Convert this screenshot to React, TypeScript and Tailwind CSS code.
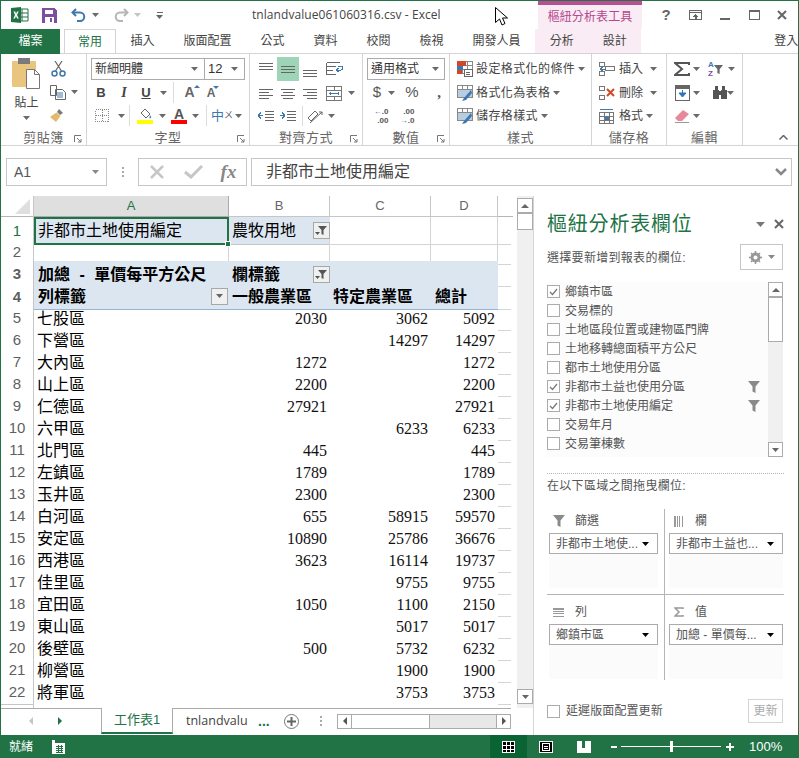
import React from "react";

type P = { className?: string; children?: React.ReactNode };

const Svg = ({ w = 16, h = 16, children, className = "" }: { w?: number; h?: number; children?: React.ReactNode; className?: string }) => (
  <svg width={w} height={h} viewBox={`0 0 ${w} ${h}`} className={`block shrink-0 ${className}`} fill="none" shapeRendering="crispEdges">
    {children}
  </svg>
);

const Caret = ({ className = "", color = "#6a6a6a" }: { className?: string; color?: string }) => (
  <svg width="7" height="4" viewBox="0 0 7 4" className={`block shrink-0 ${className}`}><path d="M0 0h7L3.500 4z" fill={color} /></svg>
);

const Launcher = () => (
  <svg width="8" height="8" viewBox="0 0 8 8" className="block"><path d="M.5 7V.5H7M3 3l4 4M4 7h3V4" stroke="#777" fill="none" /></svg>
);

const VSep = ({ className = "" }: P) => <div className={`w-px self-stretch bg-[#dcdcdc] ${className}`} />;

const Group = ({ label, w, children, launcher }: { label: string; w: number; children?: React.ReactNode; launcher?: boolean }) => (
  <div className="relative flex h-full shrink-0 flex-col border-r border-[#d4d4d4]" style={{ width: w }}>
    <div className="h-[75px] shrink-0">{children}</div>
    <div className="flex h-[17px] items-center justify-center text-[13px] leading-none tracking-[0.5px] text-[#666]">{label}</div>
    {launcher && <div className="absolute bottom-[2px] right-[4px]"><Launcher /></div>}
  </div>
);

const CellBtn = ({ children, w, className = "" }: { children?: React.ReactNode; w: number; className?: string }) => (
  <div className={`flex h-full shrink-0 items-center justify-center ${className}`} style={{ width: w }}>{children}</div>
);

const LinesIcon = ({ ys, xs }: { ys: number[]; xs: [number, number][] }) => (
  <Svg w={16} h={16}>
    {ys.map((y, i) => <rect key={i} x={xs[i][0]} y={y} width={xs[i][1]} height={1} fill="#666" />)}
  </Svg>
);

const FilterGlyph = ({ color = "#8a8a8a", size = 12 }: { color?: string; size?: number }) => (
  <svg width={size} height={size} viewBox="0 0 12 12" className="block shrink-0"><path d="M0 0h12L7.500 5.500V12l-3-1.500v-5z" fill={color} /></svg>
);

const FilterBtn = () => (
  <div className="flex h-[17px] w-[17px] items-center justify-center border border-[#a8a8a8] bg-[#f0f0f0]">
    <svg width="13" height="11" viewBox="0 0 13 11"><path d="M3 1h9L8.500 5v5l-2-1V5z" fill="#555" /><path d="M0 7h5L2.500 10z" fill="#555" /></svg>
  </div>
);

const ArrowBtn = () => (
  <div className="flex h-[17px] w-[17px] items-center justify-center border border-[#a8a8a8] bg-[#f0f0f0]"><Caret color="#666" /></div>
);

const rows: [string, string, string, string][] = [
  ["七股區", "2030", "3062", "5092"], ["下營區", "", "14297", "14297"], ["大內區", "1272", "", "1272"], ["山上區", "2200", "", "2200"],
  ["仁德區", "27921", "", "27921"], ["六甲區", "", "6233", "6233"], ["北門區", "445", "", "445"], ["左鎮區", "1789", "", "1789"],
  ["玉井區", "2300", "", "2300"], ["白河區", "655", "58915", "59570"], ["安定區", "10890", "25786", "36676"], ["西港區", "3623", "16114", "19737"],
  ["佳里區", "", "9755", "9755"], ["宜田區", "1050", "1100", "2150"], ["東山區", "", "5017", "5017"], ["後壁區", "500", "5732", "6232"],
  ["柳營區", "", "1900", "1900"], ["將軍區", "", "3753", "3753"],
];

const grid = "grid grid-cols-[33px_195px_101px_101px_67px_13px]";
const rowHead = "flex items-center justify-center border-r border-b border-[#c6c6c6] bg-white pt-[2px] text-[15px] text-[#5f5f5f]";
const gl = "border-r border-b border-[#d4d4d4]";

const TitleBar = () => (
  <div className="flex h-[28px] shrink-0 items-center">
    <div className="ml-[10px]">
      <svg width="18" height="16" viewBox="0 0 18 16" className="block">
        <path d="M7 2h10v12H7z" fill="#fff" stroke="#217346" />
        <path d="M11 2v12M7 6h10M7 10h10" stroke="#217346" />
        <path d="M0 1l10-1v16L0 15z" fill="#217346" />
        <path d="M2.500 4.500h1.800L5 7l1-2.500h1.700L6 8l1.800 3.500H6L5 9l-1 2.500H2.300L4 8z" fill="#fff" />
      </svg>
    </div>
    <div className="ml-[13px]">
      <svg width="15" height="15" viewBox="0 0 15 15" className="block" shapeRendering="crispEdges">
        <path d="M0 0h12l3 3v12H0z" fill="#7d4f9f" />
        <rect x="3" y="2" width="8" height="4" fill="#fff" />
        <rect x="3" y="9" width="9" height="6" fill="#fff" />
        <rect x="8" y="10" width="2" height="4" fill="#7d4f9f" />
      </svg>
    </div>
    <div className="ml-[14px]">
      <svg width="16" height="14" viewBox="0 0 16 14" className="block"><path d="M5 1L1.500 4.500 5 8" stroke="#3d78b0" strokeWidth="2" fill="none" /><path d="M2 4.500h7a4.200 4.200 0 0 1 0 8.500H6" stroke="#3d78b0" strokeWidth="2" fill="none" /></svg>
    </div>
    <Caret className="ml-[5px]" />
    <div className="ml-[14px]">
      <svg width="16" height="14" viewBox="0 0 16 14" className="block"><path d="M11 1l3.500 3.500L11 8" stroke="#b5b5b5" strokeWidth="2" fill="none" /><path d="M14 4.500H7a4.200 4.200 0 0 0 0 8.500h3" stroke="#b5b5b5" strokeWidth="2" fill="none" /></svg>
    </div>
    <Caret className="ml-[5px]" color="#c4c4c4" />
    <div className="ml-[15px] flex flex-col items-center gap-[2px]">
      <div className="h-px w-[6px] bg-[#666]" />
      <Caret color="#666" />
    </div>
    <div className="ml-[89px] w-[286px] shrink-0 font-['Open_Sans','Noto_Sans_CJK_TC',sans-serif] text-[12px] tracking-[0.06px] text-[#444]">tnlandvalue061060316.csv - Excel</div>
    <div className="flex h-full w-[104px] shrink-0 flex-col bg-[#f9ecf4]">
      <div className="h-[4px] bg-[#b84f92]" />
      <div className="flex flex-1 items-center justify-center text-[12px] tracking-[0.1px] text-[#b5478d]">樞紐分析表工具</div>
    </div>
    <div className="flex flex-1 items-center">
      <CellBtn w={40} className="pl-[8px] text-[15px] font-bold text-[#666]">?</CellBtn>
      <CellBtn w={26}>
        <Svg w={13} h={10}><rect x=".5" y=".5" width="12" height="9" stroke="#666" /><rect x="0" y="2" width="13" height="1" fill="#666" /><path d="M4 6h5M5 5h3M6 4h1M6 6h1v3H6z" stroke="#666" /></Svg>
      </CellBtn>
      <CellBtn w={34}><div className="mt-[7px] h-[2px] w-[10px] bg-[#666]" /></CellBtn>
      <CellBtn w={24}><div className="h-[10px] w-[11px] border border-t-2 border-[#666]" /></CellBtn>
      <CellBtn w={32}>
        <svg width="10" height="10" viewBox="0 0 10 10"><path d="M1 1l8 8M9 1L1 9" stroke="#666" strokeWidth="2" /></svg>
      </CellBtn>
    </div>
  </div>
);

const Tab = ({ t, active }: { t: string; active?: boolean }) => (
  <div className={`flex h-full shrink-0 items-center justify-center text-[12px] leading-none ${active ? "relative z-10 h-[25px] border border-b-0 border-[#d4d4d4] bg-white px-[13px] text-[#217346]" : "px-[14.500px] text-[#444]"}`}>{t}</div>
);

const TabBar = () => (
  <div className="flex h-[25px] shrink-0 items-center border-b border-[#d4d4d4]">
    <div className="flex h-[25px] w-[59px] shrink-0 items-center justify-center bg-[#217346] text-[12px] text-white">檔案</div>
    <div className="w-[4px] shrink-0" />
    <Tab t="常用" active />
    <Tab t="插入" /><Tab t="版面配置" /><Tab t="公式" /><Tab t="資料" /><Tab t="校閱" /><Tab t="檢視" /><Tab t="開發人員" />
    <div className="flex h-[24px] shrink-0 self-start bg-[#f9ecf4]"><Tab t="分析" /><Tab t="設計" /></div>
    <div className="ml-[133px] shrink-0 whitespace-nowrap text-[12px] text-[#444]">登入</div>
  </div>
);

const Clipboard = () => (
  <div className="flex h-full pl-[12px] pt-[3px]">
    <div className="flex w-[27px] flex-col items-center">
      <svg width="29" height="32" viewBox="0 0 29 32" className="block shrink-0">
        <rect x="0" y="4" width="24" height="26" rx="1" fill="#eac57f" />
        <rect x="6" y="1" width="12" height="6" fill="#7a7a7a" />
        <path d="M14.500 12.500h8l5 5v14h-13z" fill="#fff" stroke="#777" />
        <path d="M22.500 12.500v5h5" stroke="#777" fill="none" />
      </svg>
      <div className="mt-[7px] text-[12px] leading-[14px] text-[#444]">貼上</div>
      <Caret className="mt-[6px]" />
    </div>
    <div className="ml-[10px] flex flex-col">
      <div className="flex h-[24px] items-center pl-[1px]">
        <svg width="15" height="16" viewBox="0 0 15 16"><circle cx="3.500" cy="12.500" r="2.500" stroke="#3d78b0" strokeWidth="1.500" fill="none" /><circle cx="11.500" cy="12.500" r="2.500" stroke="#3d78b0" strokeWidth="1.500" fill="none" /><path d="M4.500 10L11 0M10.500 10L4 0" stroke="#666" strokeWidth="1.200" /></svg>
      </div>
      <div className="flex h-[22px] items-center">
        <svg width="16" height="15" viewBox="0 0 16 15"><path d="M.5.500h6v10h-6zM5.500 4.500h7l3 3v7h-10z" fill="#fff" stroke="#666" /><path d="M7 8h6M7 10h6M7 12h6" stroke="#3d78b0" /></svg>
        <Caret className="ml-[5px]" />
      </div>
      <div className="flex h-[24px] items-center">
        <svg width="16" height="15" viewBox="0 0 16 15"><path d="M9 1l4 4-3 2-3-3z" fill="#7a7a7a" /><path d="M6.500 4.500L10.500 8 6 14 0 9z" fill="#e5b96c" /></svg>
      </div>
    </div>
  </div>
);

const FontG = () => (
  <div className="flex h-full flex-col pl-[4px] pt-[4px]">
    <div className="flex h-[22px] w-[154px] border border-[#ababab] text-[#333]">
      <div className="flex w-[113px] items-center justify-between border-r border-[#ababab] pl-[3px] pr-[6px] text-[12px]">新細明體<Caret /></div>
      <div className="flex flex-1 items-center justify-between pl-[3px] pr-[6px] text-[13px]">12<Caret /></div>
    </div>
    <div className="flex h-[24px] items-center pt-[1px]">
      <CellBtn w={20} className="font-['Liberation_Sans',sans-serif] text-[13px] font-bold text-[#444]">B</CellBtn>
      <CellBtn w={26} className="font-['Liberation_Serif',serif] text-[14px] font-bold italic text-[#444]">I</CellBtn>
      <CellBtn w={18} className="font-['Liberation_Sans',sans-serif] text-[13px] font-bold text-[#444] underline">U</CellBtn>
      <CellBtn w={16}><Caret /></CellBtn>
      <VSep className="my-[1px] ml-[2px]" />
      <CellBtn w={31}>
        <div className="relative font-['Liberation_Sans',sans-serif] text-[14px] font-bold text-[#666]">A<span className="absolute -right-[5px] top-[3px] h-0 w-0 border-x-[3px] border-b-[3px] border-x-transparent border-b-[#3d78b0]" /></div>
      </CellBtn>
      <CellBtn w={12}>
        <div className="relative font-['Liberation_Sans',sans-serif] text-[12px] font-bold text-[#666]">A<span className="absolute -right-[4px] top-[2px] h-0 w-0 border-x-[3px] border-t-[3px] border-x-transparent border-t-[#3d78b0]" /></div>
      </CellBtn>
    </div>
    <div className="flex h-[23px] items-center">
      <CellBtn w={22}><Svg w={14} h={13}><path d="M.5.500h13v12H.5z" stroke="#888" strokeDasharray="1 1" /><path d="M7 1v11M1 6.500h12" stroke="#888" strokeDasharray="1 1" /></Svg></CellBtn>
      <CellBtn w={16}><Caret /></CellBtn>
      <VSep className="my-[1px]" />
      <CellBtn w={30}>
        <div className="flex flex-col items-center">
          <svg width="13" height="12" viewBox="0 0 13 12"><path d="M6 1l5 5-4 4-5-5z" fill="#fff" stroke="#666" /><path d="M11 7c1 1.500 1.500 2.200 1 3-.6.7-1.600.3-1.500-.5z" fill="#3d78b0" /></svg>
          <div className="h-[4px] w-[16px] bg-[#ffff00]" />
        </div>
      </CellBtn>
      <CellBtn w={4}><Caret /></CellBtn>
      <CellBtn w={30}>
        <div className="flex flex-col items-center">
          <div className="h-[12px] font-['Liberation_Sans',sans-serif] text-[14px] font-bold leading-[13px] text-[#555]">A</div>
          <div className="h-[4px] w-[16px] bg-[#ff0000]" />
        </div>
      </CellBtn>
      <CellBtn w={3}><Caret /></CellBtn>
      <VSep className="my-[1px] ml-[9px]" />
      <CellBtn w={24} className="pl-[6px]"><span className="text-[13px] text-[#3d78b0]">中</span><span className="text-[9px] leading-[9px] text-[#555]">ㄨ</span></CellBtn>
      <CellBtn w={14}><Caret /></CellBtn>
    </div>
  </div>
);

const Wrap = () => (
  <Svg w={17} h={15}><path d="M.5.500h13M.5 4.500h9M.5 8.500h6M.5 12.500h9M.5.500v12" stroke="#666" /><path d="M10 8h4.500a2 2 0 0 0 0-4H12M10 8l3-2M10 8l3 2" stroke="#3d78b0" /></Svg>
);

const AlignG = () => {
  const l = (a: number[]) => a;
  return (
    <div className="flex h-full flex-col pl-[5px] pt-[3px]">
      <div className="flex h-[24px] items-center">
        <CellBtn w={22}><LinesIcon ys={l([2, 5, 8])} xs={[[1, 14], [1, 14], [1, 14]]} /></CellBtn>
        <CellBtn w={22} className="bg-[#9fd5b7]"><LinesIcon ys={l([5, 8, 11])} xs={[[1, 14], [1, 14], [1, 14]]} /></CellBtn>
        <CellBtn w={22}><LinesIcon ys={l([9, 12, 15])} xs={[[1, 14], [1, 14], [1, 14]]} /></CellBtn>
        <CellBtn w={20} className="ml-[3px]"><Wrap /></CellBtn>
      </div>
      <div className="flex h-[23px] items-center pt-[1px]">
        <CellBtn w={22}><LinesIcon ys={l([4, 7, 10, 13])} xs={[[1, 14], [1, 10], [1, 14], [1, 10]]} /></CellBtn>
        <CellBtn w={22}><LinesIcon ys={l([4, 7, 10, 13])} xs={[[1, 14], [3, 10], [1, 14], [3, 10]]} /></CellBtn>
        <CellBtn w={22}><LinesIcon ys={l([4, 7, 10, 13])} xs={[[1, 14], [5, 10], [1, 14], [5, 10]]} /></CellBtn>
        <CellBtn w={20} className="ml-[3px]"><Svg w={16} h={15}><path d="M.5.500h15v14H.5zM.5 4.500h15M.5 10.500h15M8 .500v4M8 10.500v4" stroke="#777" /><path d="M3 7.500h10M4 6v3M12 6v3" stroke="#3d78b0" /></Svg></CellBtn>
        <CellBtn w={14}><Caret /></CellBtn>
      </div>
      <div className="flex h-[24px] items-center">
        <CellBtn w={22}><Svg w={16} h={14}><path d="M7 2h9M7 5h9M7 8h9M7 11h9" stroke="#666" /><path d="M0 6.500h5M0 6.500l3-3M0 6.500l3 3" stroke="#3d78b0" /></Svg></CellBtn>
        <CellBtn w={22}><Svg w={16} h={14}><path d="M7 2h9M7 5h9M7 8h9M7 11h9" stroke="#666" /><path d="M0 6.500h5M5 6.500l-3-3M5 6.500l-3 3" stroke="#3d78b0" /></Svg></CellBtn>
        <VSep className="my-[2px] ml-[3px]" />
        <CellBtn w={24}><svg width="16" height="15" viewBox="0 0 16 15"><path d="M1 9l7-7 3 3-7 7z" fill="none" stroke="#666" /><path d="M3 14L15 3M15 3h-3M15 3v3" stroke="#666" /></svg></CellBtn>
        <Caret className="ml-[1px]" />
      </div>
    </div>
  );
};

const NumG = () => (
  <div className="flex h-full flex-col pl-[4px] pt-[4px]">
    <div className="flex h-[22px] w-[78px] items-center justify-between border border-[#ababab] pl-[3px] pr-[5px] text-[12px] text-[#333]">通用格式<Caret /></div>
    <div className="flex h-[24px] items-center pt-[1px]">
      <CellBtn w={20} className="font-['Liberation_Sans',sans-serif] text-[15px] text-[#555]">$</CellBtn>
      <Caret className="ml-[1px]" />
      <CellBtn w={34} className="font-['Liberation_Sans',sans-serif] text-[15px] text-[#555]">%</CellBtn>
      <CellBtn w={20} className="font-['Liberation_Serif',serif] text-[15px] font-bold text-[#555]">,</CellBtn>
    </div>
    <div className="flex h-[23px] items-center font-['Liberation_Sans',sans-serif] text-[8px] font-bold leading-[9px] text-[#555]">
      <CellBtn w={28}><div className="text-right"><span className="text-[#3d78b0]">←</span>.0<br />.00</div></CellBtn>
      <CellBtn w={24}><div className="text-right">.00<br /><span className="text-[#3d78b0]">→</span>.0</div></CellBtn>
    </div>
  </div>
);

const StyleIcon = ({ kind }: { kind: 0 | 1 }) => (
  <Svg w={16} h={16}>
    <path d="M.5.500h15v12H.5zM.5 4.500h15M.5 8.500h15M5.500.500v12M10.500.500v12" stroke="#888" />
    {kind === 0 ? (
      <>
        <rect x="0" y="0" width="9" height="5" fill="#d24726" />
        <rect x="0" y="5" width="6" height="4" fill="#3d78b0" />
        <rect x="0" y="9" width="5" height="4" fill="#d24726" />
        <rect x="7" y="8" width="8" height="7" fill="#fff" stroke="#666" />
        <path d="M9 11h4M9 13h4" stroke="#666" />
      </>
    ) : (
      <>
        <rect x="1" y="5" width="14" height="7" fill="#b9cde0" />
        <path d="M14 5L7 13l-2 3 4-1 6-7z" fill="#3d78b0" shapeRendering="auto" />
      </>
    )}
  </Svg>
);

const StyleRow = ({ t, kind, h }: { t: string; kind: 0 | 1; h: number }) => (
  <div className="flex items-center pl-[7px] text-[12px] tracking-[0.4px] text-[#444]" style={{ height: h }}>
    <StyleIcon kind={kind} />
    <span className="ml-[3px]">{t}</span>
    <Caret className="ml-[3px]" />
  </div>
);

const CellRow = ({ t, icon, h, wide }: { t: string; icon: React.ReactNode; h: number; wide?: boolean }) => (
  <div className="flex items-center pl-[7px] text-[12px] text-[#444]" style={{ height: h }}>
    <div className="w-[17px]">{icon}</div>
    <span className="ml-[3px]">{t}</span>
    <Caret className={wide ? "ml-[7px]" : "ml-[3px]"} />
  </div>
);

const EditG = () => (
  <div className="flex h-full flex-col pt-[3px]">
    <div className="flex h-[24px] items-center">
      <CellBtn w={24} className="pl-[6px]"><svg width="16" height="14" viewBox="0 0 16 14" className="shrink-0"><path d="M15 3V1H1l7 6-7 6h14v-2" stroke="#555" strokeWidth="2" fill="none" /></svg></CellBtn>
      <Caret className="ml-[2px]" />
      <div className="ml-[8px] flex w-[20px] items-center font-['Liberation_Sans',sans-serif] text-[8px] font-bold leading-[9px]">
        <span className="flex flex-col"><span className="text-[#3d78b0]">A</span><span className="text-[#7d4f9f]">Z</span></span>
        <FilterGlyph color="#666" size={9} />
      </div>
      <Caret />
    </div>
    <div className="flex h-[23px] items-center">
      <CellBtn w={24} className="pl-[6px]">
        <svg width="15" height="16" viewBox="0 0 15 16" className="shrink-0"><rect x=".5" y=".5" width="14" height="15" fill="#fff" stroke="#666" /><rect x="1" y="1" width="13" height="3" fill="#666" /><path d="M7.500 5v6M4 8l3.500 4L11 8z" fill="#2f75b5" stroke="#2f75b5" /></svg>
      </CellBtn>
      <Caret className="ml-[2px]" />
      <CellBtn w={26} className="pl-[14px]">
        <svg width="16" height="15" viewBox="0 0 16 15" className="shrink-0"><path d="M3 1h3v4H3zM10 1h3v4h-3zM1 5h6v9H1zM9 5h6v9H9zM7 6h2v4H7z" fill="#555" /></svg>
      </CellBtn>
      <Caret className="ml-[1px]" />
    </div>
    <div className="flex h-[24px] items-center">
      <CellBtn w={24} className="pl-[6px]"><svg width="16" height="13" viewBox="0 0 16 13" className="shrink-0"><path d="M9 0l6 4-7 7H4L1 8z" fill="#e8899b" /><path d="M1 12.500h14" stroke="#999" /></svg></CellBtn>
      <Caret className="ml-[2px]" />
    </div>
  </div>
);

const Ribbon = () => (
  <div className="flex h-[92px] shrink-0 items-stretch border-b border-[#d4d4d4]">
    <Group label="剪貼簿" w={86} launcher><Clipboard /></Group>
    <Group label="字型" w={163} launcher><FontG /></Group>
    <Group label="對齊方式" w={113} launcher><AlignG /></Group>
    <Group label="數值" w={87} launcher><NumG /></Group>
    <Group label="樣式" w={142}>
      <div className="pt-[3px]">
        <StyleRow t="設定格式化的條件" kind={0} h={24} />
        <StyleRow t="格式化為表格" kind={1} h={23} />
        <StyleRow t="儲存格樣式" kind={1} h={24} />
      </div>
    </Group>
    <Group label="儲存格" w={75}>
      <div className="pt-[3px]">
        <CellRow t="插入" wide h={24} icon={<Svg w={16} h={14}><path d="M.5.500h5v4h-5zM.5 9.500h5v4h-5zM6.500 4.500h9v4h-9z" stroke="#777" /><path d="M1 7h6M1 7l3-2M1 7l3 2" stroke="#3d78b0" /></Svg>} />
        <CellRow t="刪除" wide h={23} icon={<Svg w={16} h={14}><path d="M.5.500h5v4h-5zM.5 9.500h5v4h-5z" stroke="#777" /><path d="M8 3l7 7M15 3l-7 7" stroke="#d24726" strokeWidth="2" shapeRendering="auto" /></Svg>} />
        <CellRow t="格式" h={24} icon={<Svg w={15} h={16}><path d="M.5 4.500h14v11H.5zM.5 8.500h14M.5 12.500h14M5.500 4.500v11M10.500 4.500v11" stroke="#777" /><path d="M1 1.500h13" stroke="#3d78b0" /><rect x="6" y="9" width="4" height="3" fill="#3d78b0" /></Svg>} />
      </div>
    </Group>
    <Group label="編輯" w={76}><EditG /></Group>
    <div className="relative flex-1">
      <svg width="9" height="5" viewBox="0 0 9 5" className="absolute bottom-[5px] right-[10px]"><path d="M.5 4.500l4-4 4 4" stroke="#666" strokeWidth="1.500" fill="none" /></svg>
    </div>
  </div>
);

const FormulaBar = () => (
  <div className="mt-[12px] flex h-[28px] shrink-0 items-stretch pl-[5px] pr-[6px]">
    <div className="flex w-[101px] items-center justify-between border border-[#c6c6c6] pl-[7px] pr-[7px] font-['Liberation_Sans',sans-serif] text-[14px] text-[#555]">A1<Caret color="#888" /></div>
    <div className="flex w-[31px] flex-col items-center justify-center gap-[2px]">
      <i className="h-[2px] w-[2px] bg-[#aaa]" /><i className="h-[2px] w-[2px] bg-[#aaa]" /><i className="h-[2px] w-[2px] bg-[#aaa]" />
    </div>
    <div className="flex w-[109px] items-center border border-[#c6c6c6]">
      <CellBtn w={36}><svg width="16" height="14" viewBox="0 0 16 14"><path d="M2 1l12 12M14 1L2 13" stroke="#c6c6c6" strokeWidth="2.500" /></svg></CellBtn>
      <CellBtn w={36}><svg width="19" height="14" viewBox="0 0 19 14"><path d="M1 7l6 5L18 1" stroke="#c6c6c6" strokeWidth="3" fill="none" /></svg></CellBtn>
      <CellBtn w={35} className="font-['Liberation_Serif',serif] text-[19px] font-bold italic text-[#888]">fx</CellBtn>
    </div>
    <div className="ml-[4px] flex flex-1 items-center justify-between border border-[#c6c6c6] pl-[14px] pr-[4px] text-[16px] text-[#444]">
      非都市土地使用編定
      <svg width="12" height="8" viewBox="0 0 12 8"><path d="M1 1l5 5 5-5" stroke="#888" strokeWidth="2.500" fill="none" /></svg>
    </div>
  </div>
);

const Num = ({ v, className = "" }: { v: string; className?: string }) => (
  <div className={`flex items-center justify-end pr-[3px] pt-[2px] font-['Liberation_Serif',serif] text-[16px] text-[#111] ${className}`}>{v}</div>
);

const ColHead = ({ t, active }: { t: string; active?: boolean }) => (
  <div className={`flex items-center justify-center border-r border-b font-['Liberation_Sans',sans-serif] text-[13px] ${active ? "border-[#ababab] bg-[#dfdfdf] text-[#217346]" : "border-[#c6c6c6] bg-white text-[#666]"}`}>{t}</div>
);

const Sheet = () => (
  <div className="relative w-[510px] flex-1 overflow-hidden">
    <div className={`${grid} h-[21px] border-b border-[#b5b5b5]`}>
      <div className="flex items-end justify-end border-r border-[#c6c6c6] p-[3px]"><svg width="15" height="15" viewBox="0 0 15 15"><path d="M15 0v15H0z" fill="#dfdfdf" /></svg></div>
      <ColHead t="A" active /><ColHead t="B" /><ColHead t="C" /><ColHead t="D" /><div />
    </div>
    <div className={`${grid} h-[22px] text-[16px] text-black`}>
      <div className={`${rowHead} bg-[#dfdfdf] text-[#217346]`}>1</div>
      <div className="relative z-10 flex items-center border-2 border-[#217346] bg-[#dce6f1] pl-[2px]">非都市土地使用編定
        <div className="absolute -bottom-[4px] -right-[4px] h-[6px] w-[6px] border border-white bg-[#217346]" />
      </div>
      <div className="flex items-center justify-between border-b border-[#c6c6c6] bg-[#dce6f1] pl-[3px]"><span className="pt-[1px]">農牧用地</span><FilterBtn /></div>
      <div className={gl} /><div className={gl} /><div className="border-b border-[#d4d4d4]" />
    </div>
    <div className={`${grid} h-[22px]`}>
      <div className={rowHead}>2</div><div className={gl} /><div className={gl} /><div className={gl} /><div className={gl} /><div className="border-b border-[#d4d4d4]" />
    </div>
    <div className={`${grid} h-[22px] text-[16px] font-bold text-black`}>
      <div className={rowHead}>3</div>
      <div className="flex items-center whitespace-nowrap bg-[#dce6f1] pl-[4px] pt-[2px] [word-spacing:5px]">加總 - 單價每平方公尺</div>
      <div className="flex items-center justify-between bg-[#dce6f1] pl-[3px]"><span className="pt-[2px]">欄標籤</span><FilterBtn /></div>
      <div className="bg-[#dce6f1]" /><div className="bg-[#dce6f1]" /><div className="border-b border-[#d4d4d4]" />
    </div>
    <div className={`${grid} h-[22px] text-[16px] font-bold text-black`}>
      <div className={rowHead}>4</div>
      <div className="flex items-center justify-between border-b border-[#95b3d7] bg-[#dce6f1] pl-[4px] pr-[1px]"><span className="pt-[2px]">列標籤</span><ArrowBtn /></div>
      <div className="flex items-center whitespace-nowrap border-b border-[#95b3d7] bg-[#dce6f1] pl-[3px] pt-[2px]">一般農業區</div>
      <div className="flex items-center whitespace-nowrap border-b border-[#95b3d7] bg-[#dce6f1] pl-[3px] pt-[2px]">特定農業區</div>
      <div className="flex items-center whitespace-nowrap border-b border-[#95b3d7] bg-[#dce6f1] pl-[4px] pt-[2px]">總計</div>
      <div className="border-b border-[#d4d4d4]" />
    </div>
    {rows.map((r, i) => (
      <div key={r[0]} className={`${grid} h-[22px] text-[16px] text-black`}>
        <div className={rowHead}>{i + 5}</div>
        <div className="flex items-center pl-[3px] pt-[2px]">{r[0]}</div>
        <Num v={r[1]} /><Num v={r[2]} /><Num v={r[3]} />
        <div className="border-b border-[#d4d4d4]" />
      </div>
    ))}
    <div className={`${grid} h-[8px]`}>
      <div className="border-r border-[#c6c6c6]" /><div /><div /><div /><div /><div />
    </div>
  </div>
);

const VScroll = () => (
  <div className="flex w-[16px] flex-col bg-[#f0f0f0] pb-[4px] pt-[2px]">
    <div className="flex h-[15px] items-center justify-center border border-[#ababab] bg-white"><svg width="8" height="4" viewBox="0 0 8 4"><path d="M0 4h8L4 0z" fill="#666" /></svg></div>
    <div className="h-[17px] border border-[#ababab] bg-white" />
    <div className="flex-1" />
    <div className="flex h-[15px] items-center justify-center border border-[#ababab] bg-white"><Caret color="#666" /></div>
  </div>
);

const SheetTabs = () => (
  <div className="flex h-[27px] shrink-0 items-start text-[12px]">
    <div className="flex h-[25px] w-[100px] items-center border-t border-[#ababab]">
      <svg width="4" height="8" viewBox="0 0 4 8" className="ml-[28px]"><path d="M4 0v8L0 4z" fill="#c6c6c6" /></svg>
      <svg width="4" height="8" viewBox="0 0 4 8" className="ml-[25px]"><path d="M0 0v8l4-4z" fill="#217346" /></svg>
    </div>
    <div className="flex h-[26px] w-[72px] items-center justify-center border-x border-b-2 border-[#ababab] border-b-[#217346] text-[13px] text-[#217346]">工作表1</div>
    <div className="flex h-[25px] items-center border-t border-[#ababab]">
      <span className="ml-[13px] w-[65px] whitespace-nowrap font-['Open_Sans',sans-serif] text-[12.500px] text-[#444]">tnlandvalu</span>
      <span className="ml-[7px] w-[20px] font-['Liberation_Sans',sans-serif] text-[14px] font-bold leading-none text-[#217346]">...</span>
      <div className="ml-[6px] flex h-[15px] w-[15px] items-center justify-center rounded-full border border-[#777]">
        <svg width="9" height="9" viewBox="0 0 9 9"><path d="M4.500 0v9M0 4.500h9" stroke="#666" strokeWidth="2" /></svg>
      </div>
      <div className="ml-[21px] flex w-[3px] flex-col gap-[2px]"><i className="h-[2px] w-[2px] bg-[#aaa]" /><i className="h-[2px] w-[2px] bg-[#aaa]" /><i className="h-[2px] w-[2px] bg-[#aaa]" /></div>
      <div className="ml-[14px] flex h-[15px] w-[174px] items-stretch border border-[#ababab] bg-[#e8e8e8]">
        <div className="flex w-[14px] items-center justify-center border-r border-[#ababab] bg-white"><svg width="4" height="8" viewBox="0 0 4 8"><path d="M4 0v8L0 4z" fill="#555" /></svg></div>
        <div className="w-[78px] border-r border-[#ababab] bg-white" />
        <div className="flex-1" />
        <div className="flex w-[14px] items-center justify-center border-l border-[#ababab] bg-white"><svg width="4" height="8" viewBox="0 0 4 8"><path d="M0 0v8l4-4z" fill="#555" /></svg></div>
      </div>
    </div>
  </div>
);

const fields: [string, boolean, boolean][] = [
  ["鄉鎮市區", true, false], ["交易標的", false, false], ["土地區段位置或建物區門牌", false, false], ["土地移轉總面積平方公尺", false, false],
  ["都市土地使用分區", false, false], ["非都市土益也使用分區", true, true], ["非都市土地使用編定", true, true], ["交易年月", false, false], ["交易筆棟數", false, false],
];

const Check = ({ on }: { on?: boolean }) => (
  <div className="flex h-[13px] w-[13px] shrink-0 items-center justify-center border border-[#ababab] bg-white">
    {on && <svg width="9" height="8" viewBox="0 0 9 8"><path d="M1 4l2.500 2.500L8 1" stroke="#777" fill="none" strokeWidth="1.200" /></svg>}
  </div>
);

const Drop = ({ t, w }: { t: string; w: number }) => (
  <div className="flex h-[21px] items-center justify-between border border-[#ababab] bg-white pl-[6px] pr-[8px] text-[12px] text-[#555]" style={{ width: w }}>
    <span className="whitespace-nowrap">{t}</span><Caret color="#000" />
  </div>
);

const Area = ({ icon, t, d, w, className = "" }: { icon: React.ReactNode; t: string; d: string; w: number; className?: string }) => (
  <div className={`flex flex-col ${className}`}>
    <div className="flex h-[24px] items-center text-[12px] text-[#555]">
      <div className="flex w-[19px] justify-center">{icon}</div>
      <span className="ml-[7px]">{t}</span>
    </div>
    <Drop t={d} w={w} />
    <div className="h-[34px] bg-[#fbfbfb]" style={{ width: w }} />
  </div>
);

const Panel = () => (
  <div className="flex w-[265px] flex-col border-l border-[#d4d4d4] pl-[13px] pr-[14px]">
    <div className="mt-[13px] flex h-[30px] items-center justify-between">
      <div className="text-[20px] leading-none tracking-[0.8px] text-[#217346]">樞紐分析表欄位</div>
      <div className="flex items-center gap-[9px]">
        <svg width="9" height="5" viewBox="0 0 9 5"><path d="M0 0h9L4.500 5z" fill="#777" /></svg>
        <svg width="10" height="10" viewBox="0 0 10 10"><path d="M1 1l8 8M9 1L1 9" stroke="#666" strokeWidth="2" /></svg>
      </div>
    </div>
    <div className="mt-[5px] flex h-[26px] items-center justify-between pr-[1px]">
      <div className="pt-[2px] text-[12px] tracking-[0.3px] text-[#555]">選擇要新增到報表的欄位:</div>
      <div className="flex h-[26px] w-[43px] items-center justify-center gap-[6px] border border-[#c6c6c6]">
        <svg width="13" height="13" viewBox="0 0 13 13"><circle cx="6.500" cy="6.500" r="3.500" stroke="#999" strokeWidth="3" fill="none" /><path d="M6.500 0v13M0 6.500h13M2 2l9 9M11 2l-9 9" stroke="#999" strokeWidth="1.500" /><circle cx="6.500" cy="6.500" r="2" fill="#fff" /></svg>
        <Caret color="#888" />
      </div>
    </div>
    <div className="mt-[12px] flex h-[175px] pr-[1px]">
      <div className="flex-1 bg-[#fcfcfc]">
        {fields.map(([t, on, flt]) => (
          <div key={t} className="flex h-[19px] items-center pr-[8px] text-[12px] text-[#555]">
            <Check on={on} />
            <span className="ml-[5px] flex-1 whitespace-nowrap">{t}</span>
            {flt && <FilterGlyph />}
          </div>
        ))}
      </div>
      <div className="flex w-[15px] flex-col bg-[#f0f0f0]">
        <div className="flex h-[15px] items-center justify-center border border-[#ababab] bg-white"><svg width="8" height="4" viewBox="0 0 8 4"><path d="M0 4h8L4 0z" fill="#666" /></svg></div>
        <div className="h-[45px] border border-[#ababab] bg-white" />
        <div className="flex-1" />
        <div className="flex h-[15px] items-center justify-center border border-[#ababab] bg-white"><Caret color="#666" /></div>
      </div>
    </div>
    <div className="mt-[16px] border-t border-dotted border-[#b5b5b5]" />
    <div className="mt-[3px] h-[18px] text-[12px] leading-[18px] tracking-[0.3px] text-[#555]">在以下區域之間拖曳欄位:</div>
    <div className="mt-[14px] grid grid-cols-[118px_119px]">
      <div className="h-[86px] border-r border-b border-[#b5b5b5] pl-[2px]">
        <Area icon={<FilterGlyph />} t="篩選" d="非都市土地使..." w={109} />
      </div>
      <div className="h-[86px] border-b border-[#b5b5b5] pl-[4px]">
        <Area icon={<svg width="10" height="11" viewBox="0 0 10 11" shapeRendering="crispEdges"><path d="M0 0h2v11H0zM3 0h1v11H3zM5 0h1v11H5zM8 0h1v11H8z" fill="#999" /></svg>} t="欄" d="非都市土益也..." w={114} />
      </div>
      <div className="h-[85px] border-r border-[#b5b5b5] pl-[2px] pt-[5px]">
        <Area icon={<svg width="11" height="9" viewBox="0 0 11 9" shapeRendering="crispEdges"><path d="M0 0h11v2H0zM0 3h11v1H0zM0 5h11v1H0zM0 8h11v1H0z" fill="#999" /></svg>} t="列" d="鄉鎮市區" w={109} />
      </div>
      <div className="h-[85px] pl-[4px] pt-[5px]">
        <Area icon={<svg width="10" height="10" viewBox="0 0 10 10"><path d="M9 2V1H1l4 4-4 4h8V8" stroke="#999" strokeWidth="1.500" fill="none" /></svg>} t="值" d="加總 - 單價每..." w={114} />
      </div>
    </div>
    <div className="mt-[19px] flex h-[24px] items-center justify-between pr-[1px]">
      <div className="flex items-center text-[12px] tracking-[0.1px] text-[#555]"><Check /><span className="ml-[6px]">延遲版面配置更新</span></div>
      <div className="flex h-[24px] w-[35px] items-center justify-center border border-[#d4d4d4] text-[12px] text-[#aaa]">更新</div>
    </div>
  </div>
);

const StatusBar = () => (
  <div className="-mx-px flex h-[23px] shrink-0 items-center bg-[#217346] pl-[9px] text-[12px] text-white">
    <span className="w-[43px]">就緒</span>
    <svg width="13" height="14" viewBox="0 0 13 14" shapeRendering="crispEdges"><path d="M0 0h3v3h-3zM0 3h13v11H0z" fill="#fff" /><path d="M4 6h7M4 8h7M4 10h7M4 12h7M6 5v8M9 5v8" stroke="#217346" /></svg>
    <div className="ml-[425px] flex h-full w-[37px] items-center justify-center bg-[#0a6332]">
      <svg width="13" height="12" viewBox="0 0 13 12" shapeRendering="crispEdges"><path d="M.5.500h12v11H.5zM.5 4.500h12M.5 8.500h12M4.500.500v11M8.500.500v11" stroke="#fff" /></svg>
    </div>
    <CellBtn w={38}><svg width="14" height="12" viewBox="0 0 14 12" shapeRendering="crispEdges"><path d="M.5.500h13v11H.5z" stroke="#fff" /><path d="M3.500 2.500h7v7h-7zM5 5h4M5 7h4" stroke="#fff" /></svg></CellBtn>
    <CellBtn w={38}><svg width="14" height="12" viewBox="0 0 14 12" shapeRendering="crispEdges"><path d="M0 0h5v7h3V0h6v12H0z" fill="#fff" /></svg></CellBtn>
    <div className="ml-[8px] h-[2px] w-[6px] bg-white" />
    <div className="relative ml-[4px] h-px w-[100px] bg-white">
      <div className="absolute -top-[5px] left-[49px] h-[11px] w-[3px] bg-white" />
    </div>
    <svg width="8" height="8" viewBox="0 0 8 8" className="ml-[5px]" shapeRendering="crispEdges"><path d="M3 0h2v8H3zM0 3h8v2H0z" fill="#fff" /></svg>
    <span className="ml-[15px] font-['Liberation_Sans',sans-serif] text-[13px]">100%</span>
  </div>
);

export default function App() {
  return (
    <div className="relative flex h-[758px] w-[799px] flex-col overflow-hidden border-x border-t border-[#217346] bg-white font-['Liberation_Sans','Noto_Sans_CJK_TC',sans-serif]">
      <TitleBar />
      <TabBar />
      <Ribbon />
      <FormulaBar />
      <div className="mt-[10px] flex min-h-0 flex-1">
        <div className="flex w-[532px] shrink-0 flex-col">
          <div className="flex min-h-0 flex-1">
            <Sheet />
            <div className="w-[4px]" />
            <VScroll />
          </div>
          <SheetTabs />
        </div>
        <Panel />
      </div>
      <StatusBar />
      <svg width="14" height="19" viewBox="0 0 14 19" className="absolute left-[494px] top-[6px]"><path d="M.5.500v15l4-3.500 2.500 6 3-1.500-2.500-5.500H12.500z" fill="#fff" stroke="#000" /></svg>
    </div>
  );
}
